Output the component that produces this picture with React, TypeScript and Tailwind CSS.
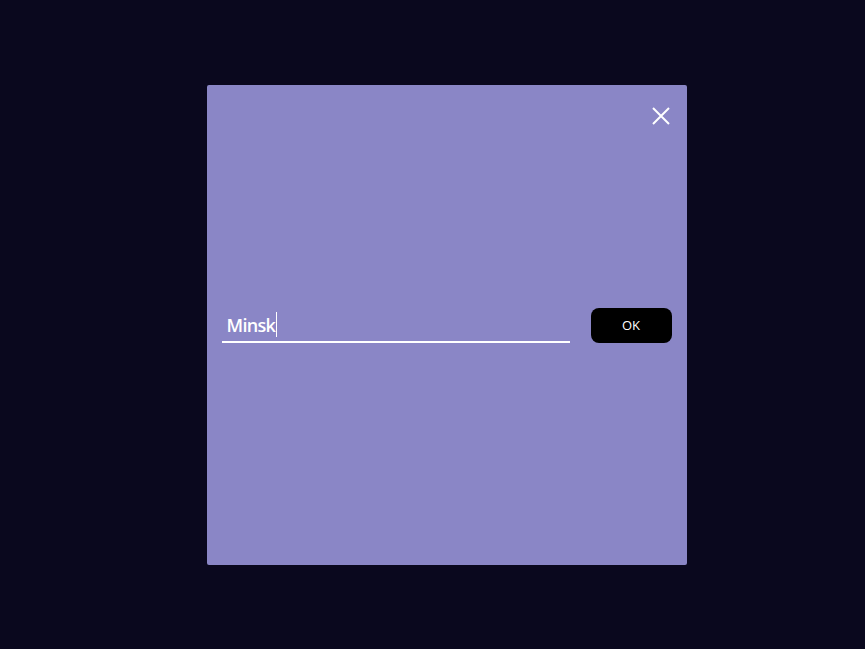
import React from "react";

export default function App() {
  return (
    <div className="w-full h-[649px] bg-[#0a081e] flex items-center justify-center" style={{ fontFamily: "'Open Sans', 'Noto Sans', sans-serif" }}>
      <div className="relative w-[480px] h-[480px] bg-[#8a86c6] rounded-[2px] flex items-center px-[15px] gap-[21px] translate-x-[14px]">
        <button className="absolute right-[16px] top-[21px] w-[20px] h-[20px] flex items-center justify-center">
          <svg width="20" height="20" viewBox="0 0 20 20" fill="none">
            <path d="M2 2 L18 18 M18 2 L2 18" stroke="white" strokeWidth="2" />
          </svg>
        </button>
        <div className="w-[348px] h-[35px] border-b-2 border-white flex items-center pl-[5px] translate-y-[1px]">
          <span className="text-white text-[18px] font-semibold leading-none tracking-[-0.7px]">Minsk</span>
          <span className="w-px h-[25px] bg-white ml-[1px]" />
        </div>
        <button className="w-[81px] h-[35px] bg-black rounded-[8px] text-white text-[13px] flex items-center justify-center translate-y-[1px]">OK</button>
      </div>
    </div>
  );
}
